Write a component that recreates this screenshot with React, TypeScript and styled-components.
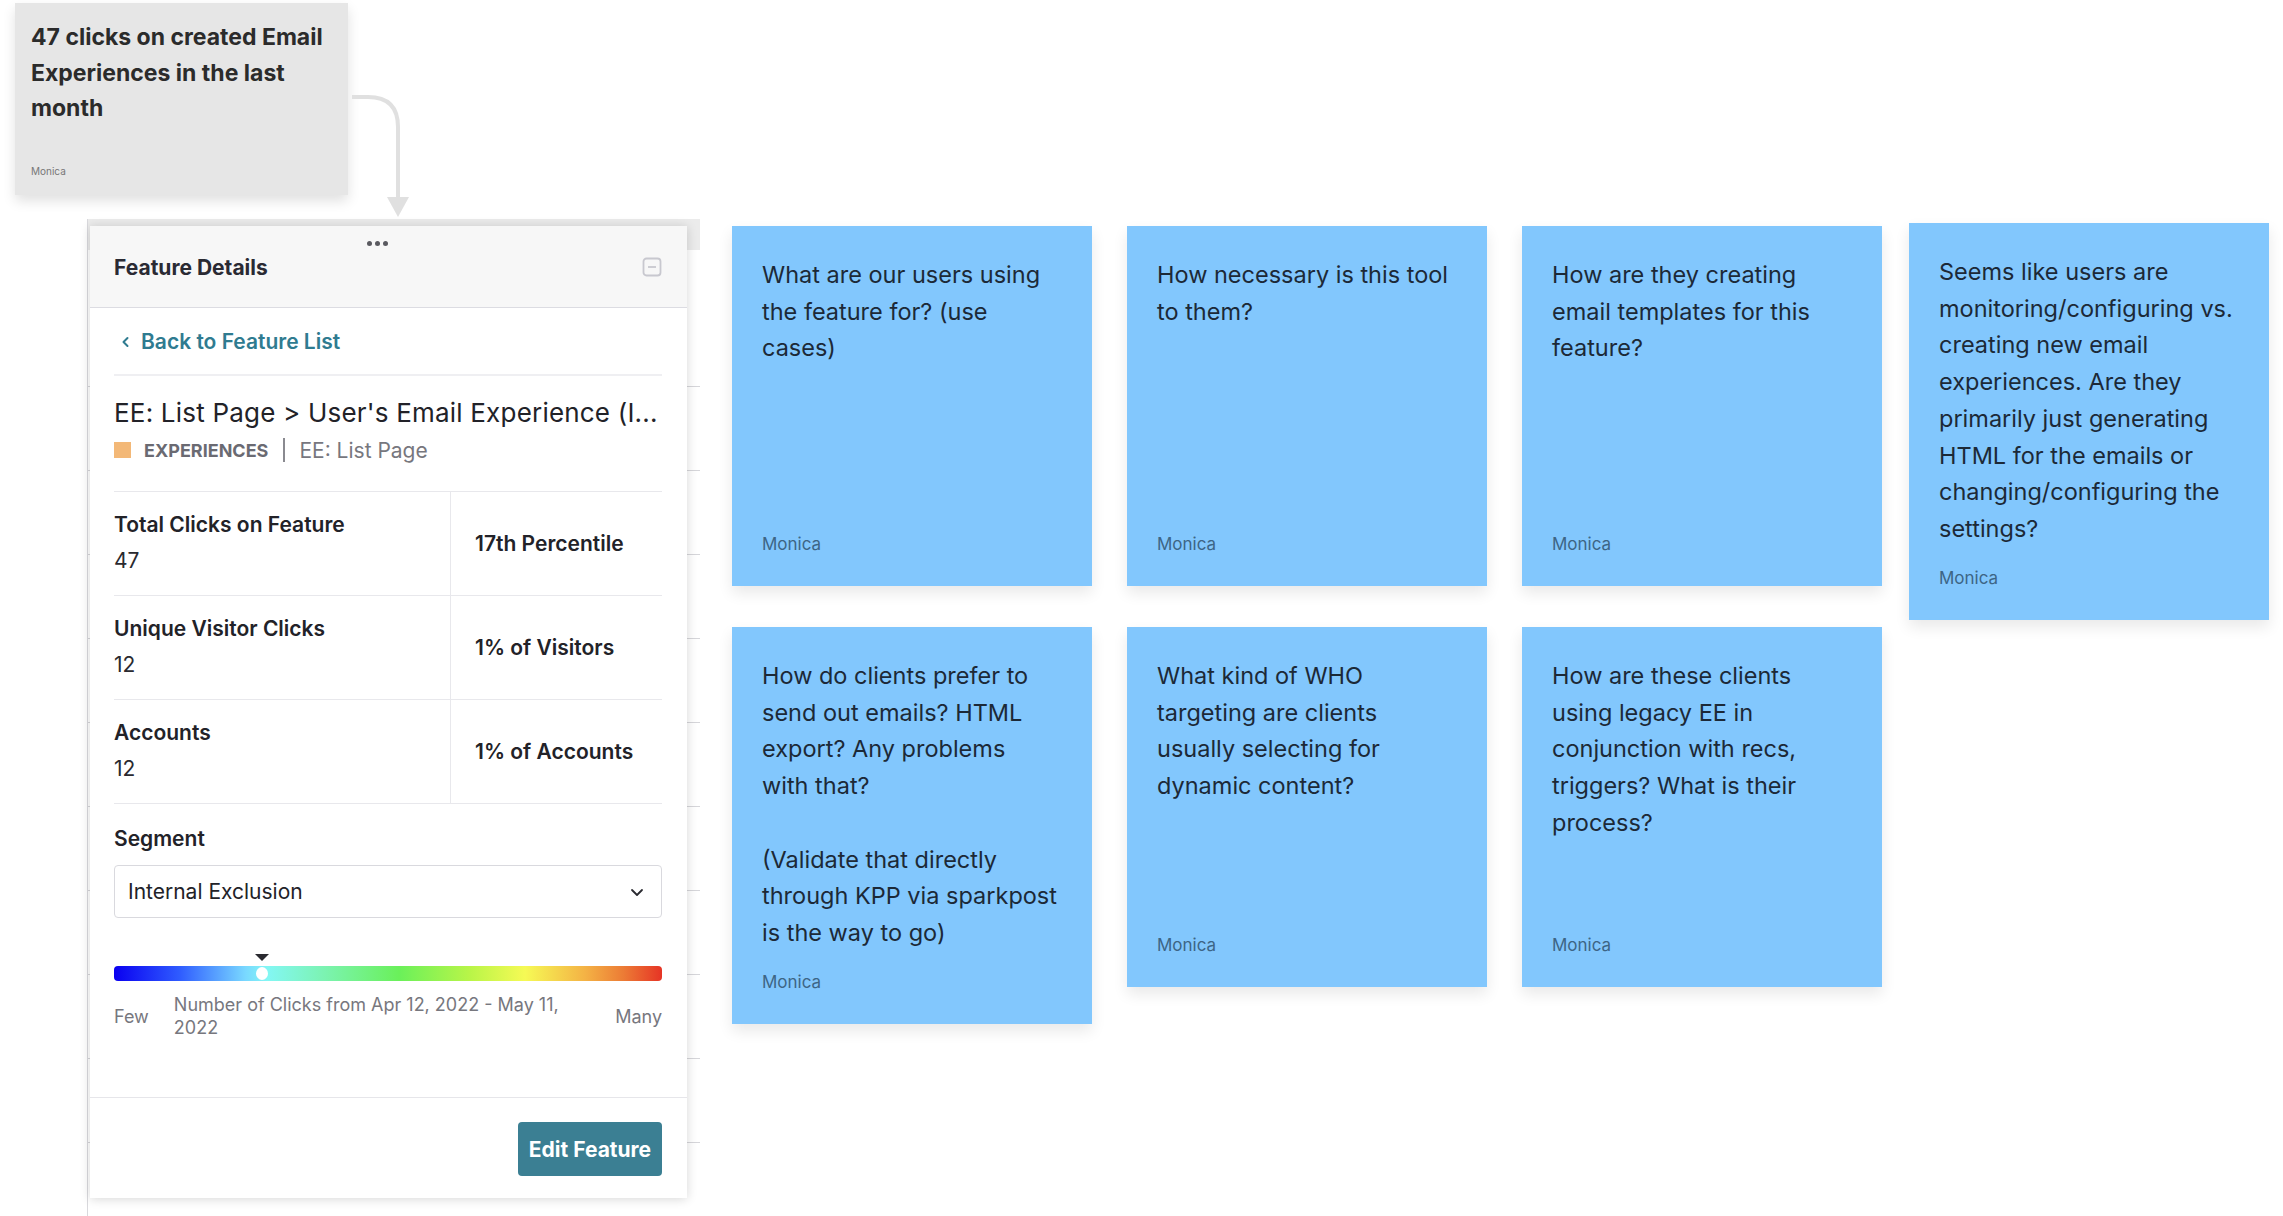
import React from "react";
import styled, { createGlobalStyle } from "styled-components";

const GlobalStyle = createGlobalStyle`
  html, body { margin: 0; padding: 0; background: #ffffff; }
  body { font-family: Inter, "Noto Sans", "Liberation Sans", sans-serif; }
  * { box-sizing: border-box; }
`;

const Canvas = styled.div`
  position: relative;
  width: 2283px;
  height: 1216px;
  overflow: hidden;
  display: flex;
  align-items: flex-start;
  background: #ffffff;
`;

const LeftColumn = styled.div`
  width: 700px;
  flex-shrink: 0;
  display: flex;
  flex-direction: column;
`;

const GreyNote = styled.div`
  margin: 3px 0 0 15px;
  width: 333px;
  min-height: 192px;
  background: #e6e6e6;
  box-shadow: 0 6px 12px rgba(0, 0, 0, 0.12);
  padding: 17px 10px 17px 16px;
  display: flex;
  flex-direction: column;
`;

const GreyNoteText = styled.div`
  font-size: 23px;
  line-height: 35.5px;
  font-weight: 700;
  color: #2b2b2b;
  white-space: pre-line;
`;

const GreyNoteAuthor = styled.div`
  margin-top: auto;
  font-size: 10px;
  line-height: 14px;
  color: #777;
`;

const Connector = styled.svg`
  position: absolute;
  left: 340px;
  top: 85px;
  overflow: visible;
`;

const Backdrop = styled.div`
  position: relative;
  margin: 24px 0 0 87px;
  width: 613px;
  height: 997px;
  border-left: 1px solid #d9d9dd;
  display: flex;
  flex-direction: column;
`;

const BackdropStrip = styled.div`
  height: 31px;
  background: #ebebeb;
`;

const BackdropRow = styled.div<{ $h: number }>`
  height: ${(p) => p.$h}px;
  flex-shrink: 0;
  border-bottom: 1px solid #d6d6da;
`;

const Panel = styled.div`
  position: absolute;
  left: 2px;
  top: 7px;
  width: 597px;
  height: 972px;
  background: #ffffff;
  box-shadow: 0 1px 10px rgba(0, 0, 0, 0.16);
  display: flex;
  flex-direction: column;
`;

const PanelHeader = styled.div`
  height: 82px;
  background: #f7f7f7;
  border-bottom: 1px solid #dcdce2;
  padding: 12px 25px 0 24px;
  display: flex;
  flex-direction: column;
`;

const DragHandle = styled.div`
  height: 10px;
  padding-right: 22px;
  display: flex;
  justify-content: center;
  align-items: center;
  gap: 3px;
`;

const Dot = styled.span`
  width: 5px;
  height: 5px;
  border-radius: 50%;
  background: #5a5a60;
`;

const HeaderRow = styled.div`
  margin-top: 5px;
  height: 28px;
  display: flex;
  align-items: center;
  justify-content: space-between;
`;

const PanelTitle = styled.div`
  font-size: 21px;
  font-weight: 700;
  color: #2a2a33;
`;

const PanelBody = styled.div`
  flex: 1;
  padding: 0 25px 0 24px;
  display: flex;
  flex-direction: column;
`;

const BackRow = styled.div`
  padding: 22px 0 20px 7px;
  border-bottom: 2px solid #efeff2;
  display: flex;
  align-items: center;
  gap: 11px;
  height: 68px;
`;

const BackLink = styled.a`
  font-size: 21px;
  line-height: 24px;
  font-weight: 600;
  color: #2f7b90;
  text-decoration: none;
`;

const FeatureName = styled.div`
  margin-top: 21px;
  font-size: 26px;
  line-height: 32px;
  letter-spacing: 0.2px;
  color: #222228;
  white-space: nowrap;
`;

const MetaRow = styled.div`
  margin-top: 9px;
  height: 24px;
  display: flex;
  align-items: center;
`;

const Swatch = styled.span`
  width: 17px;
  height: 16px;
  background: #f3b877;
  margin-right: 13px;
`;

const Category = styled.span`
  font-size: 18px;
  font-weight: 700;
  color: #6a6a72;
`;

const MetaDivider = styled.span`
  width: 2px;
  height: 24px;
  background: #8a8a90;
  margin: 0 14px 0 15px;
`;

const PageName = styled.span`
  font-size: 21px;
  color: #77777e;
`;

const StatsTable = styled.div`
  margin-top: 29px;
  border-top: 1px solid #e8e8ec;
`;

const StatRow = styled.div`
  display: grid;
  grid-template-columns: 336px 1fr;
  border-bottom: 1px solid #e8e8ec;
  height: 104px;
`;

const StatCell = styled.div`
  padding: 21px 0 0;
  display: flex;
  flex-direction: column;
  gap: 12px;
`;

const StatLabel = styled.div`
  font-size: 21px;
  line-height: 24px;
  font-weight: 600;
  color: #222228;
`;

const StatValue = styled.div`
  font-size: 21px;
  line-height: 24px;
  color: #2a2a30;
`;

const StatSide = styled.div`
  border-left: 1px solid #e8e8ec;
  padding-left: 24px;
  display: flex;
  align-items: center;
  font-size: 21px;
  font-weight: 600;
  color: #222228;
`;

const SectionLabel = styled.div`
  margin-top: 23px;
  font-size: 21px;
  line-height: 24px;
  font-weight: 600;
  color: #222228;
`;

const Select = styled.div`
  margin-top: 14px;
  height: 53px;
  border: 1px solid #d9d9de;
  border-radius: 4px;
  padding: 0 17px 0 13px;
  display: flex;
  align-items: center;
  justify-content: space-between;
  font-size: 21px;
  color: #222228;
`;

const Scale = styled.div`
  position: relative;
  margin-top: 48px;
  height: 15px;
  border-radius: 4px;
  background: linear-gradient(
    90deg,
    #0a00f0 0%,
    #2f5cff 12%,
    #79d8ff 24%,
    #83f7f4 28%,
    #7cf3b4 38%,
    #6af05a 52%,
    #b9f548 65%,
    #f6fa55 75%,
    #f4b245 86%,
    #ec7b35 93%,
    #e63425 100%
  );
`;

const ScaleMarker = styled.div`
  position: absolute;
  top: -12px;
  transform: translateX(-50%);
  width: 0;
  height: 0;
  border-left: 7px solid transparent;
  border-right: 7px solid transparent;
  border-top: 7px solid #2a2a30;
`;

const ScaleKnob = styled.div`
  position: absolute;
  top: 1px;
  transform: translateX(-50%);
  width: 12px;
  height: 13px;
  border-radius: 50%;
  background: #ffffff;
`;

const ScaleLabels = styled.div`
  margin-top: 12px;
  display: flex;
  align-items: center;
  color: #77777e;
  font-size: 18px;
  line-height: 23px;
`;

const ScaleCaption = styled.div`
  flex: 1;
  margin: 0 40px 0 25px;
`;

const PanelFooter = styled.div`
  border-top: 1px solid #e6e6ea;
  padding: 24px 25px 22px;
  display: flex;
  justify-content: flex-end;
`;

const PrimaryButton = styled.button`
  width: 144px;
  height: 54px;
  border: none;
  border-radius: 4px;
  background: #3b7f93;
  color: #ffffff;
  font-family: inherit;
  font-size: 21px;
  font-weight: 700;
`;

const NotesGrid = styled.div`
  margin: 226px 0 0 32px;
  display: grid;
  grid-template-columns: repeat(4, 360px);
  grid-template-rows: 360px auto;
  column-gap: 35px;
  row-gap: 41px;
  align-items: start;
`;

const Sticky = styled.div<{ $dx?: number; $dy?: number }>`
  width: 360px;
  min-height: 360px;
  margin-left: ${(p) => p.$dx ?? 0}px;
  margin-top: ${(p) => p.$dy ?? 0}px;
  background: #82c7fd;
  box-shadow: 0 7px 14px rgba(0, 0, 0, 0.09);
  padding: 31px 24px 30px 30px;
  display: flex;
  flex-direction: column;
`;

const StickyText = styled.div`
  font-size: 23.5px;
  line-height: 36.7px;
  color: #1c2937;
  white-space: pre-line;
`;

const StickyAuthor = styled.div`
  margin-top: auto;
  padding-top: 18px;
  font-size: 17px;
  line-height: 24px;
  color: #3d6585;
`;

type Note = { text: string; dx?: number; dy?: number };

const notes: Note[] = [
  { text: "What are our users using\nthe feature for? (use\ncases)" },
  { text: "How necessary is this tool\nto them?" },
  { text: "How are they creating\nemail templates for this\nfeature?" },
  {
    text:
      "Seems like users are\nmonitoring/configuring vs.\ncreating new email\nexperiences. Are they\nprimarily just generating\nHTML for the emails or\nchanging/configuring the\nsettings?",
    dx: -8,
    dy: -3,
  },
  {
    text:
      "How do clients prefer to\nsend out emails? HTML\nexport? Any problems\nwith that?\n\n(Validate that directly\nthrough KPP via sparkpost\nis the way to go)",
  },
  { text: "What kind of WHO\ntargeting are clients\nusually selecting for\ndynamic content?" },
  { text: "How are these clients\nusing legacy EE in\nconjunction with recs,\ntriggers? What is their\nprocess?" },
];

const stats = [
  { label: "Total Clicks on Feature", value: "47", side: "17th Percentile" },
  { label: "Unique Visitor Clicks", value: "12", side: "1% of Visitors" },
  { label: "Accounts", value: "12", side: "1% of Accounts" },
];

const backdropRows = [137, 84, 84, 84, 84, 84, 84, 84, 84, 84];

export default function App() {
  return (
    <>
      <GlobalStyle />
      <Canvas>
        <LeftColumn>
          <GreyNote>
            <GreyNoteText>{"47 clicks on created Email\nExperiences in the last\nmonth"}</GreyNoteText>
            <GreyNoteAuthor>Monica</GreyNoteAuthor>
          </GreyNote>
          <Backdrop>
            <BackdropStrip />
            {backdropRows.map((h, i) => (
              <BackdropRow key={i} $h={h} />
            ))}
            <Panel>
              <PanelHeader>
                <DragHandle>
                  <Dot />
                  <Dot />
                  <Dot />
                </DragHandle>
                <HeaderRow>
                  <PanelTitle>Feature Details</PanelTitle>
                  <svg width="20" height="20" viewBox="0 0 20 20">
                    <rect x="1.5" y="1.5" width="17" height="17" rx="3" fill="none" stroke="#c8c8cf" strokeWidth="1.8" />
                    <line x1="6" y1="10" x2="14" y2="10" stroke="#c8c8cf" strokeWidth="1.8" />
                  </svg>
                </HeaderRow>
              </PanelHeader>
              <PanelBody>
                <BackRow>
                  <svg width="9" height="14" viewBox="0 0 9 14">
                    <polyline points="6.5,3 2.5,7 6.5,11" fill="none" stroke="#2f7b90" strokeWidth="2" strokeLinecap="round" strokeLinejoin="round" />
                  </svg>
                  <BackLink>Back to Feature List</BackLink>
                </BackRow>
                <FeatureName>EE: List Page &gt; User's Email Experience (I...</FeatureName>
                <MetaRow>
                  <Swatch />
                  <Category>EXPERIENCES</Category>
                  <MetaDivider />
                  <PageName>EE: List Page</PageName>
                </MetaRow>
                <StatsTable>
                  {stats.map((s) => (
                    <StatRow key={s.label}>
                      <StatCell>
                        <StatLabel>{s.label}</StatLabel>
                        <StatValue>{s.value}</StatValue>
                      </StatCell>
                      <StatSide>{s.side}</StatSide>
                    </StatRow>
                  ))}
                </StatsTable>
                <SectionLabel>Segment</SectionLabel>
                <Select>
                  <span>Internal Exclusion</span>
                  <svg width="14" height="10" viewBox="0 0 14 10">
                    <polyline points="2,3 7,8 12,3" fill="none" stroke="#2a2a30" strokeWidth="1.8" strokeLinecap="round" strokeLinejoin="round" />
                  </svg>
                </Select>
                <Scale>
                  <ScaleMarker style={{ left: "27%" }} />
                  <ScaleKnob style={{ left: "27%" }} />
                </Scale>
                <ScaleLabels>
                  <span>Few</span>
                  <ScaleCaption>Number of Clicks from Apr 12, 2022 - May 11, 2022</ScaleCaption>
                  <span>Many</span>
                </ScaleLabels>
              </PanelBody>
              <PanelFooter>
                <PrimaryButton>Edit Feature</PrimaryButton>
              </PanelFooter>
            </Panel>
          </Backdrop>
        </LeftColumn>
        <NotesGrid>
          {notes.map((n, i) => (
            <Sticky key={i} $dx={n.dx} $dy={n.dy}>
              <StickyText>{n.text}</StickyText>
              <StickyAuthor>Monica</StickyAuthor>
            </Sticky>
          ))}
        </NotesGrid>
        <Connector width="80" height="140" viewBox="0 0 80 140">
          <path d="M12 12 L28 12 Q58 12 58 42 L58 112" fill="none" stroke="#e0e0e0" strokeWidth="4" />
          <polygon points="47,112 69,112 58,132" fill="#e0e0e0" />
        </Connector>
      </Canvas>
    </>
  );
}
